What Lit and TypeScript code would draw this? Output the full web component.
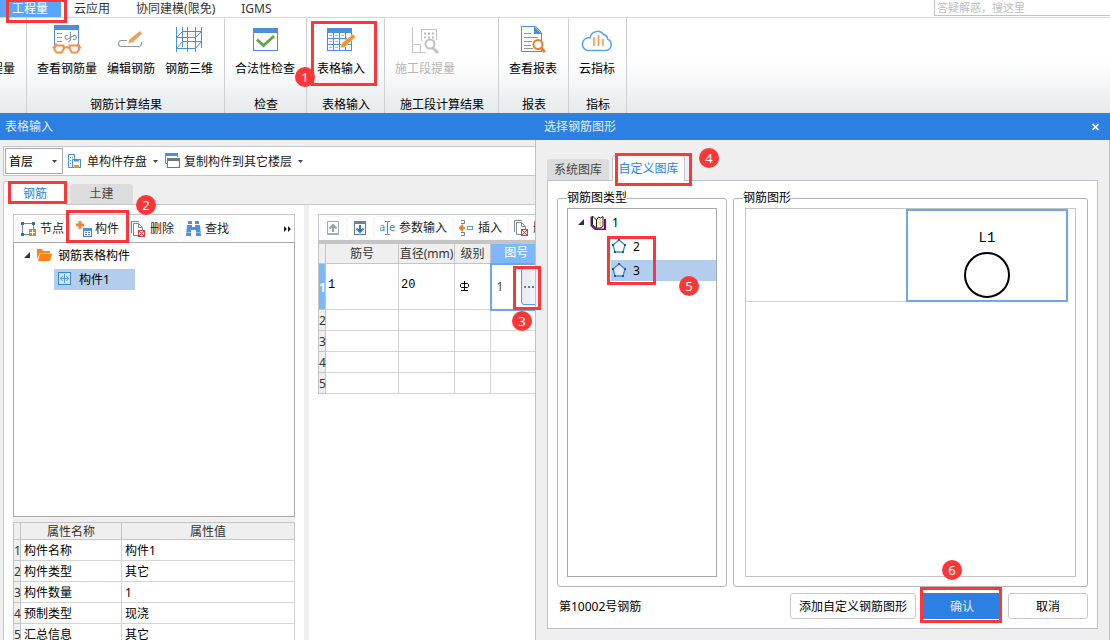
import { LitElement, html, css, svg } from "lit";
import { customElement, state } from "lit/decorators.js";
import { classMap } from "lit/directives/class-map.js";
import { styleMap } from "lit/directives/style-map.js";

const BLUE = "#4a8fd8";
const GREY = "#8f979e";

const icon = (w: number, h: number, body: unknown) =>
  html`<svg class="icon" width=${w} height=${h} viewBox="0 0 ${w} ${h}" fill="none" aria-hidden="true">${body}</svg>`;

const big = {
  view: icon(32, 32, svg`
    <path d="M3.500 1.500v20M27.500 1.500v20" stroke="${BLUE}"/>
    <rect x="3" y="1" width="25" height="5" fill="${BLUE}"/>
    <path d="M6 9.500h5M6 13.500h5M6 17.500h5" stroke="${GREY}"/>
    <path d="M19.500 8v8l-2 2M17 11.500a2 2 0 1 0 0 3.500l5-3a2 2 0 1 1 0 3" stroke="${GREY}" stroke-width="1.200"/>
    <path d="M12.500 24c1-1 5-1 6 0" stroke="#f0924a" stroke-width="2"/>
    <path d="M4 21.500h8.500v4l-2 3h-5l-2-3zM18.500 21.500H28v4l-2 3h-5l-2-3z" fill="#fff" stroke="#f0924a" stroke-width="2"/>
    <path d="M1.500 23.500h2l2-4M30.500 23.500h-2l-2-4" stroke="#f0924a" stroke-width="2"/>`),
  edit: icon(32, 32, svg`
    <path d="M12 16.500H6.500a3 3 0 0 0 0 6h17a3.500 3.500 0 0 0 3-4.500" stroke="${GREY}" stroke-width="1.200"/>
    <path d="M13 19l2-4 10-8 2 2.500-9 8.500z" fill="#f39a55"/>`),
  grid3d: icon(32, 32, svg`
    <path d="M3.500 3v25M9.500 3v20M22.500 3v25M28.500 3v21M14.500 3v25M9 7.500h20M3 13.500h20M9 17.500h20M3 24.500h20M3.500 13.500l6-6M22.500 13.500l6-6M3.500 24.500l6-7M22.500 24.500l6-7" stroke="${BLUE}"/>`),
  check: icon(32, 32, svg`
    <rect x="4.500" y="4.500" width="24" height="22" stroke="${BLUE}"/>
    <rect x="4" y="4" width="25" height="5" fill="${BLUE}"/>
    <path d="M8 15.500l6.500 6L25 12" stroke="#62a845" stroke-width="3"/>`),
  table: icon(32, 32, svg`
    <rect x="2.500" y="4.500" width="24" height="22" stroke="${BLUE}"/>
    <rect x="2" y="4" width="25" height="5" fill="${BLUE}"/>
    <path d="M3 14.500h23M3 20.500h23M8.500 9v17M14.500 9v17M20.500 9v17" stroke="${BLUE}"/>
    <path d="M4 11.500h3M10 11.500h3M16 11.500h3M4 17.500h3M10 17.500h3M4 23.500h3M10 23.500h3" stroke="#8cbaea"/>
    <path d="M15 24l2-5L28 10l2.500 3L20 23z" fill="#f0922f" stroke="#fff" stroke-width=".500"/>`),
  stage: icon(32, 32, svg`
    <path d="M3.500 3v25.500h8v-8h-8M12.500 17V5.500h15V16M11.500 28.500h5" stroke="#c6c6c6" stroke-width="1.200"/>
    <path d="M15 9.500h2M19 9.500h2M23 9.500h2M15 13.500h2M19 13.500h2M23 13.500h2" stroke="#bcbcbc" stroke-width="2"/>
    <circle cx="21" cy="20" r="4.500" fill="#fff" stroke="#c2c2c2" stroke-width="2"/>
    <path d="M24 24l5 5" stroke="#c2c2c2" stroke-width="3"/>`),
  report: icon(32, 32, svg`
    <path d="M4.500 2.500h14l6 6v19h-20z" stroke="${BLUE}"/>
    <path d="M17 2l8 8h-8z" fill="${BLUE}"/>
    <path d="M7 9.500h7M7 13.500h14M7 17.500h8M7 21.500h7M7 24.500h9" stroke="${GREY}"/>
    <circle cx="21" cy="20.500" r="4.500" fill="#fff" stroke="#ef7d2b" stroke-width="2"/>
    <path d="M24 24l4 4" stroke="#ef7d2b" stroke-width="3"/>`),
  cloud: icon(32, 32, svg`
    <path d="M6.500 26.500h18.500a6 6 0 0 0 1.500-11.500 4.500 4.500 0 0 0-4-4.500 7.500 7.500 0 0 0-13.500 3.500 6 6 0 0 0-2.500 12.500z" stroke="#5ba3ef" stroke-width="1.500"/>
    <path d="M13 22v-9M17.500 22V11M22 22v-7" stroke="#f39a4e" stroke-width="1.600"/>`),
};

const small = {
  save: icon(16, 16, svg`
    <path d="M5 14.500H.500V1.500h6V6" stroke="${BLUE}"/>
    <path d="M2 4.500h1M4 4.500h1M2 7.500h1M2 10.500h1" stroke="${BLUE}"/>
    <rect x="4.500" y="6.500" width="8" height="8" stroke="${BLUE}"/>
    <path d="M6 7.500h5" stroke="${BLUE}" stroke-width="2"/>
    <rect x="6" y="12" width="5" height="3" fill="#ef8a3a"/>`),
  copy: icon(16, 16, svg`
    <path d="M2.500 10.500h-2v-10h12V4" stroke="${BLUE}"/><rect x="0" y="0" width="13" height="3" fill="${BLUE}"/>
    <rect x="2.500" y="5.500" width="12" height="9" fill="#fff" stroke="#6d7880"/><rect x="2" y="5" width="13" height="3" fill="#6d7880"/>`),
  node: icon(16, 16, svg`
    <path d="M8 13.500H1.500v-11h11V8" stroke="#5f8fc0"/>
    <path d="M0 1h3v3H0zM11 1h3v3h-3zM0 12h3v3H0z" fill="#2f6fb5"/>
    <rect x="8" y="8" width="7" height="7" fill="#e8801f"/><path d="M9 11.500h5M11.500 9v5" stroke="#fff"/>`),
  part: icon(16, 16, svg`
    <path d="M4 0v8M0 4h8" stroke="#e8863a" stroke-width="3"/>
    <rect x="7.500" y="7.500" width="8" height="8" fill="#fff" stroke="#3b7fc4"/><rect x="7" y="7" width="9" height="3" fill="#4a90dd"/>
    <path d="M9 11.500h2M12 11.500h2M9 13.500h2M12 13.500h2" stroke="#5a7fa5"/>`),
  remove: icon(16, 16, svg`
    <path d="M.500 12V.500H8" stroke="#7f8a91"/><path d="M8 14.500H2.500v-12h5l4 4V9" stroke="#7f8a91"/><path d="M7.500 2.500v4h4" stroke="#7f8a91"/>
    <rect x="7.500" y="9.500" width="6" height="6" fill="#fbe3e3" stroke="#c44"/><path d="M8 10l5 5M13 10l-5 5" stroke="#c44"/>`),
  find: icon(16, 16, svg`
    <path d="M2 0h4v3H2zM9 0h4v3H9zM1 4h5v2h3V4h5l1 11h-5v-6H5v6H0z" fill="#4a92e2"/><path d="M0 11.500h5M10 11.500h5" stroke="#8dbcf0"/>`),
  up: icon(16, 16, svg`
    <rect x="1.500" y="1.500" width="11" height="13" stroke="#a6abb0"/><path d="M1 14h12" stroke="#a6abb0" stroke-width="2"/>
    <path d="M7 12V5M3.500 8.500L7 5l3.500 3.500" stroke="#9a9fa4" stroke-width="2"/>`),
  down: icon(16, 16, svg`
    <rect x="1.500" y="1.500" width="11" height="13" stroke="#5c7890"/><path d="M1 2.500h12" stroke="#74838f" stroke-width="3"/>
    <path d="M7 5v7M3.500 8.500L7 12l3.500-3.500" stroke="#2f78d0" stroke-width="2"/>`),
  params: icon(16, 16, svg`
    <text x="-1" y="11" font-size="11" fill="#3f87d6">a</text><text x="9" y="11" font-size="11" fill="#3f87d6">e</text>
    <path d="M5 1.500h2l.500 1 .500-1h2M7.500 2v12M5 14.500h2l.500-1 .500 1h2" stroke="#6f7f8c"/>`),
  insert: icon(16, 16, svg`
    <path d="M2 .500h3.500v3H2M2 15.500h3.500v-3H2" stroke="#6f7f8c"/>
    <path d="M6 8H1M4 5L1 8l3 3" stroke="#ee7d2b" stroke-width="2"/><rect x="8.500" y="6.500" width="5" height="3" stroke="#5a98e0"/>`),
  folder: icon(16, 16, svg`<path d="M1 2h5l1 2h7v2H4L1 12z" fill="#f08a1c"/><path d="M4 6.500h12L14 14H2z" fill="#ff8412"/>`),
  member: icon(14, 14, svg`
    <rect x=".500" y=".500" width="12" height="12" fill="#cde5fb" stroke="#3b86d4"/>
    <path d="M6.500 2v9M2.500 6.500h8M4.500 4l-2 2.500 2 2.500M8.500 4l2 2.500-2 2.500" stroke="#3b86d4" stroke-width=".800"/>`),
  book: icon(16, 16, svg`
    <path d="M1.500 2.500v9L6 15.500h9V5" stroke="#800080" stroke-width="2"/>
    <path d="M2.500 2l4 4v8l-4-3.500z" fill="#fff" stroke="#222"/>
    <path d="M6.500 6l2-3 2 1 2.500-1.500v10l-3 1.500h-3.500z" fill="#fff" stroke="#222"/><path d="M9 5v7M10.500 6v6" stroke="#e0c040" stroke-width=".800"/>`),
  pentagon: icon(16, 16, svg`
    <path d="M8 2l6 5-2 7H4L2 7z" fill="#fff" fill-opacity=".600" stroke="#3f86d8" stroke-width="1.300"/>
    <path d="M7 1h2v2H7zM13 6h2v2h-2zM11 13h2v2h-2zM3 13h2v2H3zM1 6h2v2H1z" fill="#1d55a8"/>`),
};

const caret = html`<svg class="caret" width="5" height="3" viewBox="0 0 5 3" aria-hidden="true"><path d="M0 0h5L2.500 3z" fill="#444"/></svg>`;
const expander = html`<svg class="expander" width="6" height="6" viewBox="0 0 6 6" aria-hidden="true"><path d="M6 0v6H0z" fill="#333"/></svg>`;

interface Action { label: string; art: unknown; off?: boolean }
const GROUPS: { name: string; actions: Action[] }[] = [
  { name: "钢筋计算结果", actions: [{ label: "查看钢筋量", art: big.view }, { label: "编辑钢筋", art: big.edit }, { label: "钢筋三维", art: big.grid3d }] },
  { name: "检查", actions: [{ label: "合法性检查", art: big.check }] },
  { name: "表格输入", actions: [{ label: "表格输入", art: big.table }] },
  { name: "施工段计算结果", actions: [{ label: "施工段提量", art: big.stage, off: true }] },
  { name: "报表", actions: [{ label: "查看报表", art: big.report }] },
  { name: "指标", actions: [{ label: "云指标", art: big.cloud }] },
];

const PROPS = [
  ["构件名称", "构件1"],
  ["构件类型", "其它"],
  ["构件数量", "1"],
  ["预制类型", "现浇"],
  ["汇总信息", "其它"],
];

/* Walkthrough frames and step numbers that float above the interface. */
const FRAMES = [
  [6, -1, 61, 24], [311, 21, 66, 65], [8, 181, 59, 23], [66, 210, 63, 33],
  [513, 266, 28, 44], [615, 153, 77, 33], [607, 236, 49, 49], [920, 587, 82, 36],
];
const STEPS = [[295, 67], [136, 195], [512, 311], [699, 148], [679, 276], [942, 560]];

@customElement("app-root")
export class AppRoot extends LitElement {
  @state() private shape = 3;

  static styles = css`
    :host {
      display: flex; flex-direction: column; position: relative;
      height: 100vh; overflow: hidden; background: #efefef; color: #1a1a1a;
      font: 12px/16px "Noto Sans", "Noto Sans CJK SC", sans-serif;
    }
    * { box-sizing: border-box; }
    button, input, select { font: inherit; color: inherit; margin: 0; padding: 0; border: 0; background: none; border-radius: 0; }
    button { white-space: nowrap; }
    a { color: inherit; text-decoration: none; }
    ul { list-style: none; margin: 0; padding: 0; }
    .icon { display: block; flex: none; }
    .caret { flex: none; }

    .menubar { display: flex; flex: none; height: 18px; background: #fff; border-bottom: 1px solid #d6d6d6; color: #333; }
    .menubar a { padding: 0 13px; line-height: 17px; }
    .menubar a.current { background: #58a6f9; color: #fff; padding-left: 12px; }
    .search { margin-left: auto; width: 176px; height: 16px; border: solid #bfc3c7; border-width: 0 0 1px 1px; }
    .search input { width: 100%; height: 15px; padding-left: 2px; font-size: 11px; outline: none; display: block; }
    .search input::placeholder { color: #bdbdbd; opacity: 1; }

    .ribbon { display: flex; flex: none; height: 95px; background: linear-gradient(#fff 45%, #e5eaec); overflow: hidden; }
    .group { display: flex; flex-direction: column; justify-content: space-between; flex: none; padding-top: 6px; border-right: 1px solid #cdd0d2; color: #000; }
    .group.cut { width: 27px; align-items: flex-end; padding-right: 11px; }
    .group.cut button { padding-top: 37px; }
    .actions { display: flex; gap: 10px; padding: 0 11px 0 10px; }
    .actions button { display: flex; flex-direction: column; align-items: center; gap: 5px; }
    .actions button:disabled { color: #b5b5b5; }
    .caption { text-align: center; padding: 0 14px 0 15px; }

    .work { flex: 1; min-height: 0; display: grid; grid-template-columns: minmax(0, 535fr) minmax(0, 575fr); grid-template-rows: minmax(0, 1fr); }
    .window { display: flex; flex-direction: column; min-height: 0; }
    .title { flex: none; display: flex; align-items: center; justify-content: space-between; height: 27px; padding: 0 10px 0 5px; background: #2b80e2; color: #e6f0fc; margin: 0; font: inherit; }
    .title.dialog { padding-left: 9px; }

    .filebar { display: flex; align-items: center; flex: none; height: 30px; margin: 6px 0 5px 3px; padding-left: 1px; background: #fff; border: 1px solid #c3c7cd; border-right: 0; }
    .combo { display: grid; align-items: center; width: 58px; height: 26px; border: 1px solid #a9a9a9; }
    .combo > * { grid-area: 1 / 1; }
    .combo select { appearance: none; height: 24px; padding: 2px 0 0 3px; outline: none; color: #000; }
    .combo .caret { justify-self: end; pointer-events: none; }
    .filebar button { display: flex; align-items: center; gap: 3px; padding-left: 5px; }
    .filebar button .caret { margin: 0 2px 0 3px; }
    .filebar .combo .caret { margin: 0 5px 0 0; }
    .filebar span, .tree span { padding-top: 2px; }

    .tabs { display: flex; align-items: flex-end; flex: none; }
    .tabs button { background: #dcdcdc; color: #444; border-radius: 3px 3px 0 0; }
    .tabs button.on { color: #2b80e2; background: #fff; border: 1px solid #c3c7cd; border-bottom: 0; }
    .main-tabs { margin-left: 3px; height: 24px; gap: 3px; background: linear-gradient(#c3c7cd, #c3c7cd) bottom / 100% 1px no-repeat; }
    .main-tabs button { width: 63px; height: 20px; margin-bottom: 1px; }
    .main-tabs button.on { width: 64px; height: 24px; margin: 0; }

    .panes { flex: 1; min-height: 0; margin-left: 3px; border-left: 1px solid #c3c7cd; display: grid; grid-template-columns: 300px minmax(0, 1fr); grid-template-rows: minmax(0, 1fr); gap: 5px; }
    .pane { display: flex; flex-direction: column; min-height: 0; min-width: 0; background: #fff; padding: 9px 9px 0; }
    .pane.right { padding-right: 0; overflow: hidden; }
    .tools { display: flex; align-items: center; gap: 2px; flex: none; height: 28px; padding: 0 2px; border: 1px solid #c3c7cd; border-bottom: 0; overflow: hidden; color: #222; }
    .right .tools { border-right: 0; height: 29px; border-bottom: 3px solid #c4c4c4; }
    .tools button { display: flex; align-items: center; gap: 3px; height: 22px; padding: 0 5px; border-radius: 3px; box-shadow: 0 0 0 1px #f7f7f7; flex: none; }
    .tools button.slim { padding-right: 4px; }
    .more { margin-left: auto; }

    .tree { flex: 1; min-height: 0; border: 1px solid #a8a8a8; background: #fff; color: #000; }
    .tree li { display: flex; align-items: center; height: 24px; }
    .tree .row { display: flex; align-items: center; height: 21px; }
    .tree .row.sel { background: #b3cdee; }
    .tree .root { gap: 6px; }
    .tree .expander { margin-left: 10px; }
    .parts .leaf { padding-left: 40px; }
    .parts .row { gap: 7px; padding: 0 25px 0 4px; }

    .props { flex: 0 0 118px; margin-top: 5px; overflow: hidden; box-shadow: 0 -5px #efefef; }
    table { border-collapse: collapse; table-layout: fixed; width: 100%; border: 1px solid #bdbdbd; }
    th, td { border: 1px solid #d4d4d4; padding: 2px 0 0; height: 21px; font-weight: normal; text-align: left; white-space: nowrap; color: #000; line-height: 16px; }
    thead th { background: #efefef; text-align: center; color: #333; border-color: #c4c4c4; }
    tbody th { background: #efefef; color: #333; border-color: #c4c4c4; }
    .props thead th { height: 17px; line-height: 14px; }
    .props td { padding-left: 3px; }
    .c-no { width: 7px; }
    .c-name { width: 101px; }
    .c-mark { width: 73px; }
    .c-dia { width: 56px; }
    .c-grade { width: 36px; }
    .bars { width: 225px; border-top: 0; }
    .bars thead th { height: 20px; padding: 0; }
    .bars .first > * { height: 46px; }
    .bars td { padding-left: 3px; }
    .bars .sim { font-family: "Liberation Mono", monospace; padding: 0 0 3px 2px; font-size: 12px; }
    .bars .hot { background: #7eb8fc; color: #fff; }
    .bars tbody .hot { font-weight: bold; }
    .bars td.cell { border: 2px solid #6aa8e6; padding: 0 0 0 5px; color: #444; }
    .cell div { display: flex; align-items: center; justify-content: space-between; height: 38px; }
    .cell button { width: 20px; height: 37px; border: 1px solid #5a9ad8; border-radius: 3px; background: linear-gradient(90deg, #e6eaee, #f6f8fa); }
    .cell svg { display: block; margin-left: 2px; }

    .sheet { flex: 1; min-height: 0; display: flex; flex-direction: column; padding: 15px 11px 11px; border: solid #b9c3cf; border-width: 0 1px; }
    .lib-tabs { gap: 3px; margin-bottom: -1px; z-index: 1; }
    .lib-tabs button { height: 21px; width: 62px; margin-bottom: 1px; }
    .lib-tabs button.on { height: 26px; width: 73px; margin: 0; }
    .box { flex: 1; min-height: 0; display: flex; flex-direction: column; gap: 6px; padding: 9px; background: #fff; border: 1px solid #b9c3cf; }
    .split { flex: 1; min-height: 0; display: grid; grid-template-columns: 170px minmax(0, 1fr); grid-template-rows: minmax(0, 1fr); gap: 6px; }
    fieldset { display: flex; flex-direction: column; min-width: 0; margin: 0; padding: 2px 9px 9px; border: 1px solid #b4b4b4; border-radius: 3px; }
    fieldset.art { padding: 2px 11px 9px; }
    legend { padding: 0; color: #000; }
    fieldset.art legend { margin-left: -2px; }
    .types .root { height: 25px; padding-top: 1px; }
    .types .leaf { padding-left: 43px; }
    .types .row { flex: 1; gap: 6px; color: #000; }
    .gallery { flex: 1; min-height: 0; border: 1px solid #c4c4c4; display: grid; grid-template-columns: minmax(0, 160px) minmax(0, 162px); grid-template-rows: 93px; }
    .gallery > * { border: solid #d0d0d0; border-width: 0 0 1px; }
    .gallery button.sel { border: 2px solid #6aa8e6; display: flex; flex-direction: column; align-items: center; justify-content: flex-end; padding-bottom: 1px; gap: 6px; font: 14px/14px "Liberation Mono", monospace; color: #000; }
    .foot { display: flex; align-items: center; gap: 6px; flex: none; padding-left: 2px; color: #000; }
    .foot p { margin: 0 auto 0 0; padding-top: 2px; }
    .foot button { height: 26px; width: 80px; padding-top: 2px; border: 1px solid #c8c8c8; border-radius: 3px; background: #fff; }
    .foot button.wide { width: 126px; }
    .foot button.ok { background: #2b80e2; border-color: #2b80e2; color: #e6f0fc; border-radius: 0; }

    .frame { position: absolute; border: 3px solid #fb3837; pointer-events: none; z-index: 2; }
    .step { position: absolute; width: 20px; height: 20px; border-radius: 10px; background: #fb3837; color: #fff; font-size: 13px; line-height: 20px; text-align: center; z-index: 3; }
  `;

  private tool(label: string, art: unknown) {
    return html`<button type="button">${art}<span>${label}</span></button>`;
  }

  private ribbon() {
    return html`<div class="ribbon">
      <div class="group cut"><button type="button">工程量</button></div>
      ${GROUPS.map((g) => html`<div class="group" role="group" aria-label=${g.name}>
        <div class="actions">${g.actions.map((a) => html`<button type="button" ?disabled=${a.off}>${a.art}<span>${a.label}</span></button>`)}</div>
        <div class="caption">${g.name}</div>
      </div>`)}
    </div>`;
  }

  private entry() {
    return html`<section class="window">
      <h2 class="title">表格输入</h2>
      <div class="filebar">
        <div class="combo"><select aria-label="楼层"><option>首层</option></select>${caret}</div>
        <button type="button">${small.save}<span>单构件存盘</span>${caret}</button>
        <button type="button">${small.copy}<span>复制构件到其它楼层</span>${caret}</button>
      </div>
      <div class="tabs main-tabs" role="tablist">
        <button type="button" role="tab" class="on" aria-selected="true">钢筋</button>
        <button type="button" role="tab" aria-selected="false">土建</button>
      </div>
      <div class="panes">
        <div class="pane">
          <div class="tools">
            ${this.tool("节点", small.node)}${this.tool("构件", small.part)}${this.tool("删除", small.remove)}${this.tool("查找", small.find)}
            <svg class="more" width="9" height="6" viewBox="0 0 9 6" aria-hidden="true"><path d="M1 0l3 3-3 3zM5 0l3 3-3 3z" fill="#222"/></svg>
          </div>
          <ul class="tree parts" role="tree">
            <li class="root" role="treeitem">${expander}${small.folder}<span>钢筋表格构件</span></li>
            <li class="leaf" role="treeitem" aria-selected="true"><div class="row sel">${small.member}<span>构件1</span></div></li>
          </ul>
          <div class="props">
            <table>
              <colgroup><col class="c-no"><col class="c-name"><col></colgroup>
              <thead><tr><th></th><th>属性名称</th><th>属性值</th></tr></thead>
              <tbody>${PROPS.map(([k, v], i) => html`<tr><th scope="row">${i + 1}</th><td>${k}</td><td>${v}</td></tr>`)}</tbody>
            </table>
          </div>
        </div>
        <div class="pane right">
          <div class="tools">
            <button type="button" class="slim" aria-label="上移">${small.up}</button>
            <button type="button" class="slim" aria-label="下移">${small.down}</button>
            ${this.tool("参数输入", small.params)}${this.tool("插入", small.insert)}${this.tool("删除", small.remove)}
          </div>
          <table class="bars">
            <colgroup><col class="c-no"><col class="c-mark"><col class="c-dia"><col class="c-grade"><col></colgroup>
            <thead><tr><th></th><th>筋号</th><th>直径(mm)</th><th>级别</th><th class="hot">图号</th></tr></thead>
            <tbody>
              <tr class="first"><th scope="row" class="hot">1</th><td class="sim">1</td><td class="sim">20</td>
                <td><svg width="12" height="12" viewBox="0 0 12 12" fill="none" aria-label="三级钢"><path d="M6.500 1v9M2.500 4.500l1-1h6l1 1v2l-1 1h-6l-1-1zM3 10.500h7" stroke="#000"/></svg></td>
                <td class="cell"><div>1<button type="button" aria-label="选择图号"><svg width="12" height="2" viewBox="0 0 12 2"><path d="M0 0h2v2H0zM4 0h2v2H4zM8 0h2v2H8z" fill="#3f87d6"/></svg></button></div></td></tr>
              ${[2, 3, 4, 5].map((n) => html`<tr><th scope="row">${n}</th><td></td><td></td><td></td><td></td></tr>`)}
            </tbody>
          </table>
        </div>
      </div>
    </section>`;
  }

  private picker() {
    return html`<section class="window" role="dialog" aria-label="选择钢筋图形">
      <div class="title dialog"><span>选择钢筋图形</span>
        <button type="button" aria-label="关闭"><svg class="icon" width="9" height="8" viewBox="0 0 9 8"><path d="M1.500 1l6 6M7.500 1l-6 6" stroke="#fff" stroke-width="1.600"/></svg></button>
      </div>
      <div class="sheet">
        <div class="tabs lib-tabs" role="tablist">
          <button type="button" role="tab" aria-selected="false">系统图库</button>
          <button type="button" role="tab" class="on" aria-selected="true">自定义图库</button>
        </div>
        <div class="box">
          <div class="split">
            <fieldset><legend>钢筋图类型</legend>
              <ul class="tree types">
                <li class="root">${expander}${small.book}<span>1</span></li>
                ${[2, 3].map((n) => html`<li class="leaf"><button type="button" class=${classMap({ row: true, sel: this.shape === n })} @click=${() => (this.shape = n)}>${small.pentagon}<span>${n}</span></button></li>`)}
              </ul>
            </fieldset>
            <fieldset class="art"><legend>钢筋图形</legend>
              <div class="gallery"><div></div>
                <button type="button" class="sel"><span>L1</span><svg width="48" height="48" viewBox="0 0 48 48" fill="none" aria-hidden="true"><circle cx="24" cy="24" r="22" stroke="#000" stroke-width="2"/></svg></button>
              </div>
            </fieldset>
          </div>
          <div class="foot">
            <p>第10002号钢筋</p>
            <button type="button" class="wide">添加自定义钢筋图形</button>
            <button type="button" class="ok">确认</button>
            <button type="button">取消</button>
          </div>
        </div>
      </div>
    </section>`;
  }

  render() {
    return html`
      <nav class="menubar">
        <a href="#" class="current">工程量</a><a href="#">云应用</a><a href="#">协同建模(限免)</a><a href="#">IGMS</a>
        <div class="search"><input type="search" aria-label="搜索" placeholder="答疑解惑，搜这里"></div>
      </nav>
      ${this.ribbon()}
      <main class="work">${this.entry()}${this.picker()}</main>
      ${FRAMES.map(([x, y, w, h]) => html`<div class="frame" style=${styleMap({ left: `${x}px`, top: `${y}px`, width: `${w}px`, height: `${h}px` })}></div>`)}
      ${STEPS.map(([x, y], i) => html`<div class="step" style=${styleMap({ left: `${x}px`, top: `${y}px` })}>${i + 1}</div>`)}
    `;
  }
}
